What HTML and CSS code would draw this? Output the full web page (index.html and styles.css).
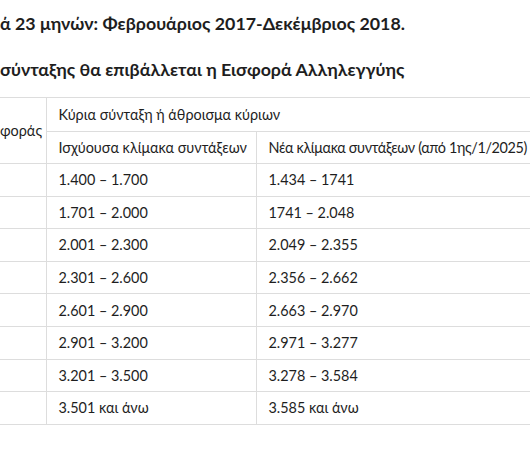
FILE: index.html
```html
<!DOCTYPE html>
<html lang="el">
<head>
<meta charset="utf-8">
<title>Εισφορά Αλληλεγγύης</title>
<link rel="stylesheet" href="styles.css">
</head>
<body>
<main class="page">
  <p class="lead">ά 23 μηνών: Φεβρουάριος 2017-Δεκέμβριος 2018.</p>
  <p class="lead lead-second">σύνταξης θα επιβάλλεται η Εισφορά Αλληλεγγύης</p>
  <table class="scale">
    <colgroup>
      <col class="col-rate">
      <col class="col-old">
      <col class="col-new">
    </colgroup>
    <thead>
      <tr class="head-top">
        <th class="rate" rowspan="2">φοράς</th>
        <th class="group" colspan="2">Κύρια σύνταξη ή άθροισμα κύριων</th>
      </tr>
      <tr class="head-sub">
        <th>Ισχύουσα κλίμακα συντάξεων</th>
        <th class="tight">Νέα κλίμακα συντάξεων (από 1ης/1/2025)</th>
      </tr>
    </thead>
    <tbody>
      <tr><td></td><td>1.400 – 1.700</td><td>1.434 – 1741</td></tr>
      <tr><td></td><td>1.701 – 2.000</td><td>1741 – 2.048</td></tr>
      <tr><td></td><td>2.001 – 2.300</td><td>2.049 – 2.355</td></tr>
      <tr><td></td><td>2.301 – 2.600</td><td>2.356 – 2.662</td></tr>
      <tr><td></td><td>2.601 – 2.900</td><td>2.663 – 2.970</td></tr>
      <tr><td></td><td>2.901 – 3.200</td><td>2.971 – 3.277</td></tr>
      <tr><td></td><td>3.201 – 3.500</td><td>3.278 – 3.584</td></tr>
      <tr><td></td><td>3.501 και άνω</td><td>3.585 και άνω</td></tr>
    </tbody>
  </table>
</main>
</body>
</html>
```
FILE: styles.css
```css
html, body {
  margin: 0;
  padding: 0;
  background: #ffffff;
  overflow: hidden;
}

body {
  font-family: "Lato", "Noto Sans", "DejaVu Sans", sans-serif;
  color: #1e1e1e;
}

.page {
  width: 530px;
  padding-top: 11px;
}

.lead {
  margin: 0 0 22px 0;
  font-size: 17.8px;
  line-height: 24px;
  font-weight: 700;
  white-space: nowrap;
}

.lead-second {
  margin-bottom: 16px;
}

.scale {
  border-collapse: collapse;
  table-layout: fixed;
  width: 530px;
  font-size: 14.4px;
  line-height: 21px;
}

.col-rate { width: 46px; }
.col-old { width: 210px; }
.col-new { width: 274px; }

.scale th,
.scale td {
  border: 1px solid #dddddd;
  padding: 5px 0 5px 12px;
  text-align: left;
  font-weight: 400;
  white-space: nowrap;
  vertical-align: middle;
  overflow: visible;
}

.scale th.rate,
.scale td:first-child {
  border-left: 0;
}

.scale tr > :last-child {
  border-right: 0;
}

.scale th.rate {
  text-align: right;
  padding: 5px 9px 5px 0;
}

.scale th.tight {
  letter-spacing: -0.35px;
}

.head-top th { height: 23px; }
.head-sub th { height: 20px; }

.scale tbody td {
  height: 21.6px;
}
```
